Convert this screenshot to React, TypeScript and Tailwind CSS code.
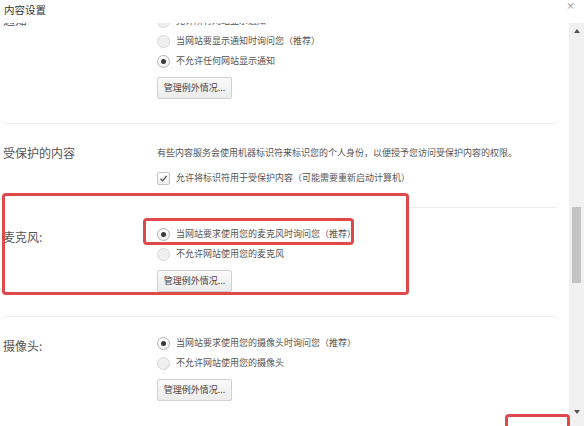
import type { ReactNode } from 'react'

const FONT = { fontFamily: '"Noto Sans CJK SC", "Noto Sans", sans-serif' }

function Radio({ checked, label }: { checked?: boolean; label: string }) {
    return (
        <div className="flex h-5 items-center gap-[6px]">
            <span
                className={
                    checked
                        ? 'flex h-[13px] w-[13px] shrink-0 items-center justify-center rounded-full border border-[#b4b4b4] bg-linear-to-b from-white to-[#f0f0f0]'
                        : 'flex h-[13px] w-[13px] shrink-0 items-center justify-center rounded-full border border-[#d6d6d6] bg-[#efefef]'
                }
            >
                {checked && <span className="h-[5px] w-[5px] rounded-full bg-[#3a3a3a]" />}
            </span>
            <span className="whitespace-nowrap">{label}</span>
        </div>
    )
}

function ManageButton() {
    return (
        <button className="mt-[6px] h-[22px] w-[75px] self-start rounded-[2px] border border-[#cfcfcf] bg-linear-to-b from-[#fafafa] to-[#ececec] text-[9px] text-[#444]">
            管理例外情况...
        </button>
    )
}

function Section({
    label,
    children,
    line = 'h-px bg-[#ededed]',
    labelPad = 'pt-[19px]',
    content = 'pt-[16px] pb-[24px]',
}: {
    label: string
    children: ReactNode
    line?: string
    labelPad?: string
    content?: string
}) {
    return (
        <div>
            <div className={line} />
            <div className="flex">
                <div className={'w-[154px] shrink-0 text-[12px] leading-5 text-[#555] ' + labelPad}>{label}</div>
                <div className={'flex flex-col text-[9px] text-[#555] ' + content}>{children}</div>
            </div>
        </div>
    )
}

export default function App() {
    return (
        <div className="relative flex h-[426px] w-[584px] flex-col overflow-hidden bg-white" style={FONT}>
            {/* Title bar */}
            <div className="flex h-[23px] shrink-0 items-start justify-between">
                <span className="pl-[4px] text-[10.5px] leading-[19px] text-[#333]">内容设置</span>
                <span className="pr-[9px] pt-[1px] text-[9px] leading-[9px] text-[#777]">×</span>
            </div>

            <div className="flex min-h-0 flex-1">
                {/* Scrolled settings list */}
                <div className="min-w-0 flex-1 overflow-hidden">
                    <div className="-mt-[29px] ml-[3px] mr-[12px]">
                        <Section label="通知" labelPad="pt-[15px]">
                            <Radio label="允许所有网站显示通知" />
                            <Radio label="当网站要显示通知时询问您（推荐）" />
                            <Radio checked label="不允许任何网站显示通知" />
                            <ManageButton />
                        </Section>

                        <Section label="受保护的内容" content="pt-[19px] pb-[19px]">
                            <div className="flex h-5 items-center whitespace-nowrap">
                                有些内容服务会使用机器标识符来标识您的个人身份，以便授予您访问受保护内容的权限。
                            </div>
                            <div className="mt-[5px] flex h-5 items-center gap-[6px]">
                                <span className="flex h-[13px] w-[13px] items-center justify-center rounded-[2px] border border-[#c4c4c4] bg-linear-to-b from-white to-[#eeeeee]">
                                    <svg width="9" height="9" viewBox="0 0 9 9" fill="none">
                                        <path d="M1.5 4.8 L3.6 6.8 L7.6 2" stroke="#555" strokeWidth="1.3" />
                                    </svg>
                                </span>
                                <span className="whitespace-nowrap">允许将标识符用于受保护内容（可能需要重新启动计算机）</span>
                            </div>
                        </Section>

                        <Section label="麦克风:" line="ml-[406px] h-px bg-[#ededed]">
                            <Radio checked label="当网站要求使用您的麦克风时询问您（推荐）" />
                            <Radio label="不允许网站使用您的麦克风" />
                            <ManageButton />
                        </Section>

                        <Section label="摄像头:">
                            <Radio checked label="当网站要求使用您的摄像头时询问您（推荐）" />
                            <Radio label="不允许网站使用您的摄像头" />
                            <ManageButton />
                        </Section>
                    </div>
                </div>

                {/* Scrollbar */}
                <div className="flex w-[15px] shrink-0 flex-col bg-[#f1f1f1] pb-[6px]">
                    <div className="flex h-4 items-center justify-center">
                        <svg width="6" height="4" viewBox="0 0 6 4">
                            <path d="M3 0 L6 4 L0 4 Z" fill="#555" />
                        </svg>
                    </div>
                    <div className="flex-1">
                        <div className="mx-auto mt-[168px] h-[76px] w-[9px] bg-[#c4c4c4]" />
                    </div>
                    <div className="flex h-4 items-center justify-center">
                        <svg width="6" height="4" viewBox="0 0 6 4">
                            <path d="M0 0 L6 0 L3 4 Z" fill="#555" />
                        </svg>
                    </div>
                </div>
            </div>

            {/* Red annotation boxes */}
            <div className="pointer-events-none absolute left-[2px] top-[193px] h-[102px] w-[407px] rounded-[4px] border-[3px] border-[#e0494c]" />
            <div className="pointer-events-none absolute left-[143px] top-[218px] h-[27px] w-[211px] rounded-[4px] border-[3px] border-[#e0494c]" />
            <div className="pointer-events-none absolute left-[505px] top-[414px] h-[20px] w-[65px] rounded-[4px] border-[3px] border-[#e0494c]" />
        </div>
    )
}
